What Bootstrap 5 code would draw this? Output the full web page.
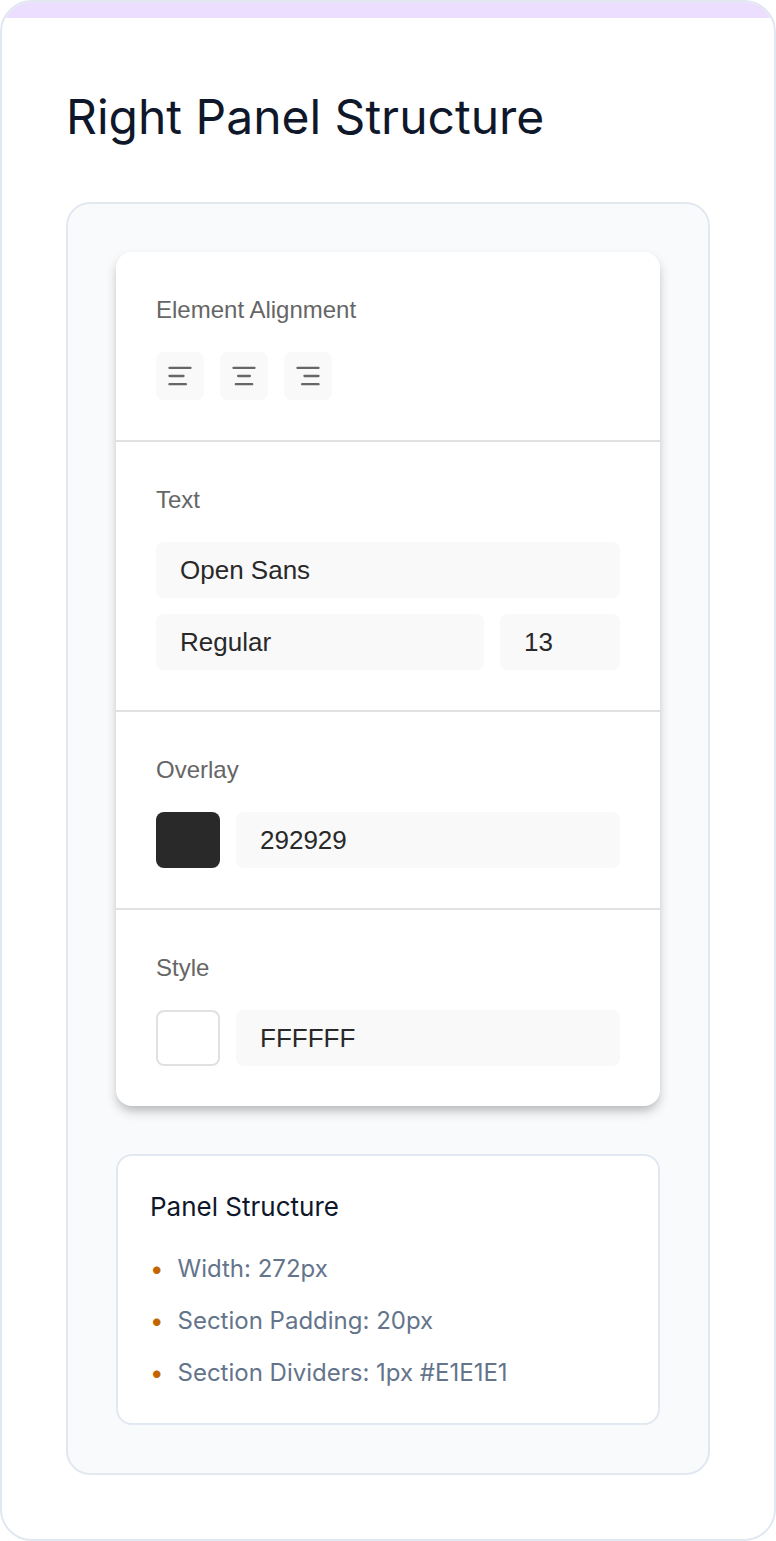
<!DOCTYPE html>
<html lang="en">
<head>
<meta charset="utf-8">
<meta name="viewport" content="width=device-width, initial-scale=1">
<title>Right Panel Structure</title>
<link href="https://cdn.jsdelivr.net/npm/bootstrap@5.3.0/dist/css/bootstrap.min.css" rel="stylesheet">
<style>
body { font-family: Inter, sans-serif; color: #0f172a; background: #fff; }
.sheet { border: 2px solid #e2e8f0; border-radius: 32px; overflow: hidden; background: #fff; }
.sheet-accent { height: 16px; background: #ebdefe; }
.sheet-body { padding: 64px; }
.sheet-title { font-size: 48px; line-height: 70px; font-weight: 400; margin-bottom: 50px; }
.stage { background: #f8fafc; border: 2px solid #e2e8f0; border-radius: 24px; padding: 48px; }
.inspector { font-family: "Liberation Sans", Arial, sans-serif; background: #fff; border-radius: 16px; box-shadow: 0 6px 12px -2px rgba(0,0,0,.3); margin-bottom: 48px; color: #292929; }
.inspector section { padding: 40px; }
.inspector section + section { border-top: 2px solid #e1e1e1; }
.inspector h2 { font-size: 24px; line-height: 36px; font-weight: 400; color: #666; margin-bottom: 24px; }
.tool { width: 48px; height: 48px; padding: 10px; border: 0; border-radius: 8px; background: #f9f9f9; }
.tool svg { display: block; }
.field, .field:focus { height: 56px; padding: 0 24px; border: 0; border-radius: 8px; background: #f9f9f9; font-size: 26px; color: #292929; min-width: 0; }
.field-size { width: 120px; }
.swatch { width: 64px; height: 56px; border: 0; border-radius: 8px; background: #292929; flex: none; }
.swatch-light { background: #fff; border: 2px solid #e1e1e1; }
.notes { background: #fff; border: 2px solid #e2e8f0; border-radius: 16px; padding: 32px; }
.notes h2 { font-size: 26px; line-height: 38px; font-weight: 400; margin-bottom: 25px; }
.notes li { font-size: 24px; line-height: 36px; color: #64748b; }
.notes li::before { content: "•"; color: #c26700; margin-right: 14px; }
.hex { font-kerning: none; font-feature-settings: "calt" 0; }
</style>
</head>
<body>
<main class="sheet">
  <div class="sheet-accent"></div>
  <div class="sheet-body">
    <h1 class="sheet-title">Right Panel Structure</h1>
    <div class="stage">
      <div class="inspector">
        <section>
          <h2>Element Alignment</h2>
          <div class="d-flex gap-3">
            <button type="button" class="btn tool" aria-label="Align left"><svg width="28" height="28" viewBox="0 0 24 24" fill="none" stroke="#666" stroke-width="2" stroke-linecap="round"><path d="M3 5h18M3 12h12M3 19h14"/></svg></button>
            <button type="button" class="btn tool" aria-label="Align center"><svg width="28" height="28" viewBox="0 0 24 24" fill="none" stroke="#666" stroke-width="2" stroke-linecap="round"><path d="M3 5h18M7 12h10M5 19h14"/></svg></button>
            <button type="button" class="btn tool" aria-label="Align right"><svg width="28" height="28" viewBox="0 0 24 24" fill="none" stroke="#666" stroke-width="2" stroke-linecap="round"><path d="M3 5h18M9 12h12M7 19h14"/></svg></button>
          </div>
        </section>
        <section>
          <h2>Text</h2>
          <div class="d-flex flex-column gap-3">
            <input class="form-control field" type="text" aria-label="Font family" value="Open Sans">
            <div class="d-flex gap-3">
              <input class="form-control field" type="text" aria-label="Font weight" value="Regular">
              <input class="form-control field field-size flex-shrink-0" type="text" aria-label="Font size" value="13">
            </div>
          </div>
        </section>
        <section>
          <h2>Overlay</h2>
          <div class="d-flex gap-3">
            <button type="button" class="swatch" aria-label="Overlay color"></button>
            <input class="form-control field" type="text" aria-label="Overlay hex value" value="292929">
          </div>
        </section>
        <section>
          <h2>Style</h2>
          <div class="d-flex gap-3">
            <button type="button" class="swatch swatch-light" aria-label="Style color"></button>
            <input class="form-control field" type="text" aria-label="Style hex value" value="FFFFFF">
          </div>
        </section>
      </div>
      <div class="notes">
        <h2>Panel Structure</h2>
        <ul class="list-unstyled d-flex flex-column gap-3 mb-0">
          <li>Width: 272px</li>
          <li>Section Padding: 20px</li>
          <li>Section Dividers: 1px <span class="hex">#E1E1E1</span></li>
        </ul>
      </div>
    </div>
  </div>
</main>
<script src="https://cdn.jsdelivr.net/npm/bootstrap@5.3.0/dist/js/bootstrap.bundle.min.js"></script>
</body>
</html>
